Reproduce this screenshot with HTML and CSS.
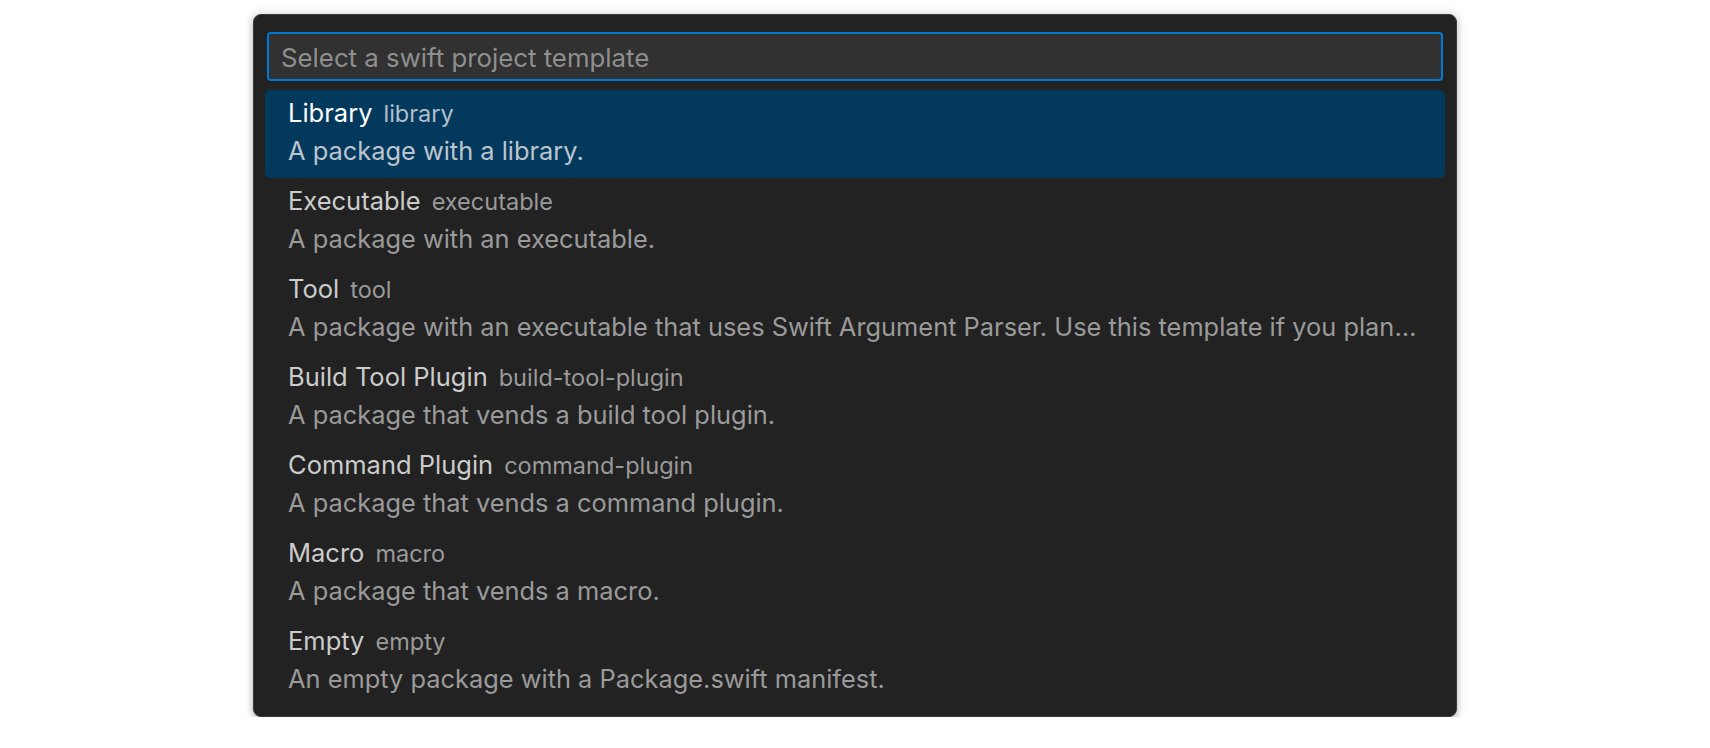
FILE: index.html
```html
<!DOCTYPE html>
<html lang="en">
<head>
<meta charset="utf-8">
<title>Select a swift project template</title>
<link rel="stylesheet" href="styles.css">
</head>
<body>
<div class="stage">
  <div class="quick-pick">
    <div class="input-box">
      <span class="placeholder">Select a swift project template</span>
    </div>
    <ul class="list">
      <li class="row selected">
        <div class="line"><span class="label">Library</span><span class="desc">library</span></div>
        <div class="detail">A package with a library.</div>
      </li>
      <li class="row">
        <div class="line"><span class="label">Executable</span><span class="desc">executable</span></div>
        <div class="detail">A package with an executable.</div>
      </li>
      <li class="row">
        <div class="line"><span class="label">Tool</span><span class="desc">tool</span></div>
        <div class="detail">A package with an executable that uses Swift Argument Parser. Use this template if you plan…</div>
      </li>
      <li class="row">
        <div class="line"><span class="label">Build Tool Plugin</span><span class="desc">build-tool-plugin</span></div>
        <div class="detail">A package that vends a build tool plugin.</div>
      </li>
      <li class="row">
        <div class="line"><span class="label">Command Plugin</span><span class="desc">command-plugin</span></div>
        <div class="detail">A package that vends a command plugin.</div>
      </li>
      <li class="row">
        <div class="line"><span class="label">Macro</span><span class="desc">macro</span></div>
        <div class="detail">A package that vends a macro.</div>
      </li>
      <li class="row">
        <div class="line"><span class="label">Empty</span><span class="desc">empty</span></div>
        <div class="detail">An empty package with a Package.swift manifest.</div>
      </li>
    </ul>
  </div>
</div>
</body>
</html>
```

FILE: styles.css
```css
* { box-sizing: border-box; }

html, body {
  margin: 0;
  padding: 0;
  background: #ffffff;
}

body {
  font-family: Inter, "Noto Sans", "Liberation Sans", sans-serif;
}

.stage {
  display: flex;
  justify-content: center;
  padding-top: 14px;
}

.quick-pick {
  width: 1204px;
  background: #222222;
  border: 1px solid #3a3a3a;
  border-radius: 8px;
  padding: 17px 13px 10px;
  box-shadow: 0 0 8px 2px rgba(0, 0, 0, 0.12), 0 4px 6px rgba(0, 0, 0, 0.18);
}

.input-box {
  height: 49px;
  background: #313131;
  border: 2px solid #0078d4;
  border-radius: 4px;
  display: flex;
  align-items: center;
  padding: 2px 12px 0;
}

.placeholder {
  font-size: 25.8px;
  color: #8f8f8f;
  white-space: nowrap;
}

.list {
  list-style: none;
  margin: 9px -2px 0;
  padding: 0;
}

.row {
  height: 88px;
  padding: 5px 22px 0 23px;
  border-radius: 6px;
  display: flex;
  flex-direction: column;
}

.row.selected {
  background: #04395e;
}

.line {
  height: 36px;
  line-height: 36px;
  white-space: nowrap;
  overflow: hidden;
}

.label {
  font-size: 25.5px;
  color: #cccccc;
}

.desc {
  font-size: 23.5px;
  color: #9a9a9a;
  margin-left: 11px;
}

.detail {
  height: 40px;
  line-height: 40px;
  font-size: 25.4px;
  color: #9a9a9a;
  white-space: nowrap;
  overflow: hidden;
}

.selected .label {
  color: #ffffff;
}

.selected .desc {
  color: #b3bfca;
}

.selected .detail {
  color: #bcc5cd;
}
```
